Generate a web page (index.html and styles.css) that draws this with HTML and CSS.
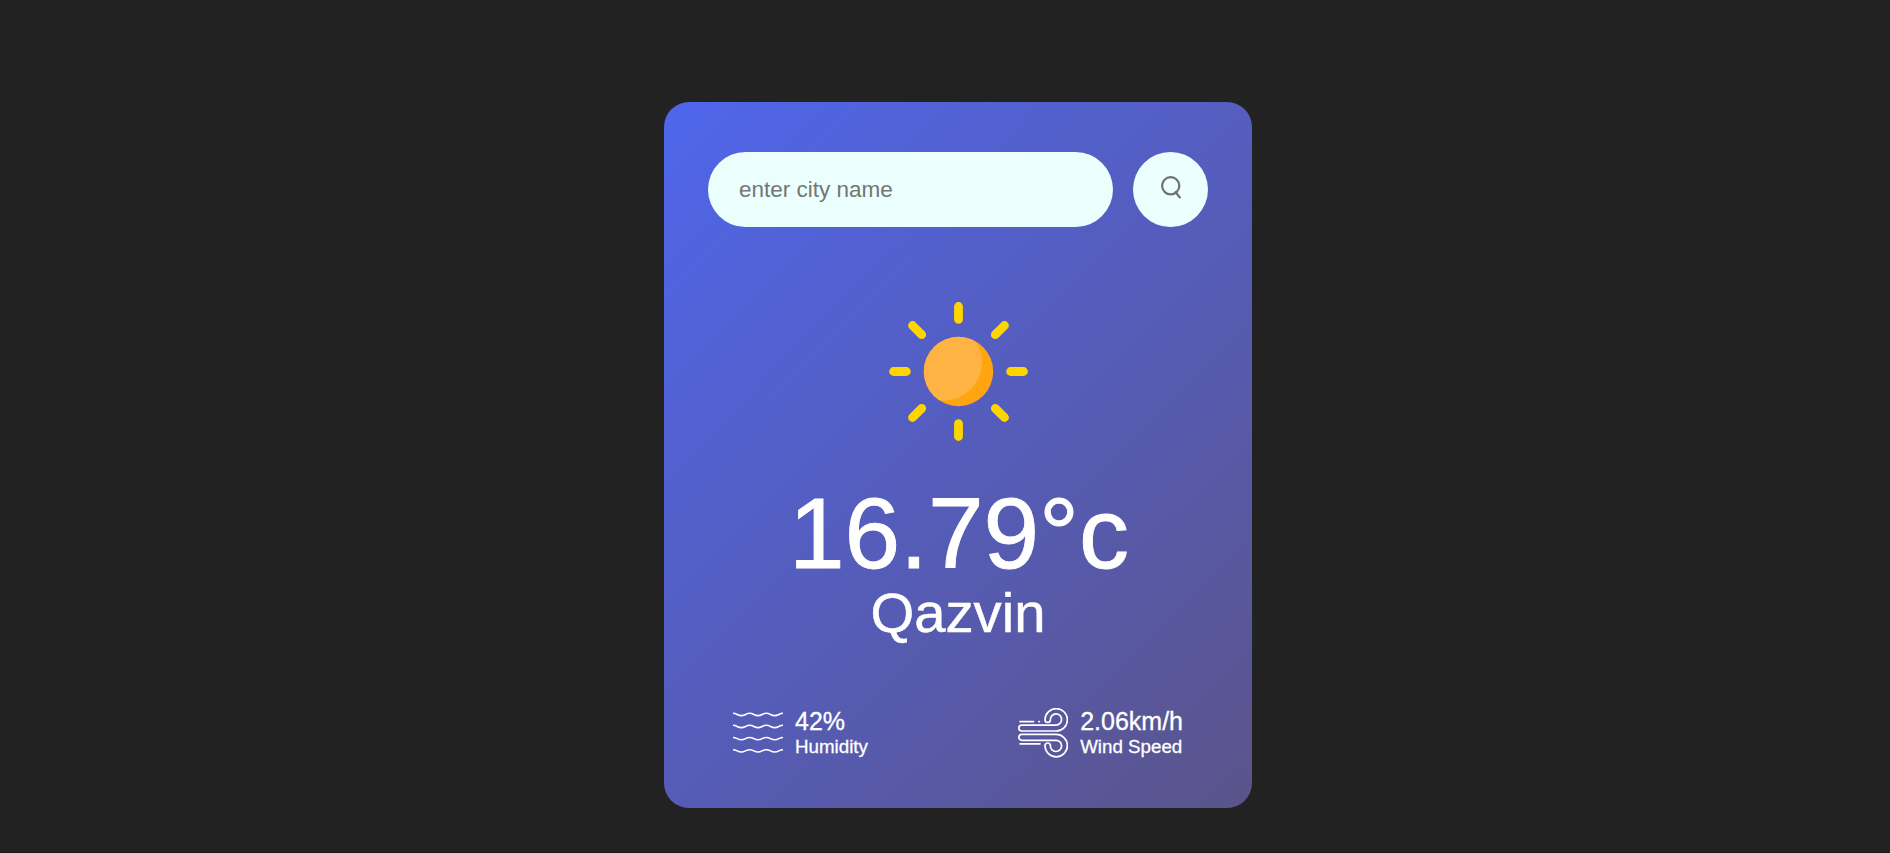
FILE: index.html
```html
<!DOCTYPE html>
<html lang="en">
<head>
<meta charset="utf-8">
<title>Weather App</title>
<link rel="stylesheet" href="styles.css">
</head>
<body>
<main class="card">
  <form class="search">
    <input class="search-input" type="text" placeholder="enter city name" spellcheck="false">
    <button class="search-button" type="button" aria-label="Search">
      <svg class="search-icon" viewBox="0 0 20 23" fill="none" stroke="#707070" stroke-width="2.2">
        <circle cx="9.7" cy="9.8" r="8.6"/>
        <path d="M14.6 16.2l4.2 5.2" stroke-linecap="round"/>
      </svg>
    </button>
  </form>
  <section class="weather">
    <svg class="weather-icon" viewBox="-0.5 -0.5 140 140">
      <clipPath id="disc"><circle cx="70" cy="70" r="34.7"/></clipPath>
      <circle cx="70" cy="70" r="34.7" fill="#ffa512"/>
      <circle cx="55.5" cy="61" r="38" fill="#ffb342" clip-path="url(#disc)"/>
      <g stroke="#ffd500" stroke-width="8.8" stroke-linecap="round">
        <path d="M70 5v12.9M70 122.1V135M5 70h12.9M122.1 70H135M24 24l9.2 9.2M116 24l-9.2 9.2M24 116l9.2-9.2M116 116l-9.2-9.2"/>
      </g>
    </svg>
    <h1 class="temp">16.79°c</h1>
    <h2 class="city">Qazvin</h2>
  </section>
  <section class="details">
    <div class="detail">
      <svg class="detail-icon" viewBox="0 0 50 50" fill="none" stroke="#fff" stroke-width="1.6">
        <path d="M0 5.3C4 5.3 4.3 7.6 8.3 7.6S12.7 5.3 16.7 5.3S21 7.6 25 7.6S29.3 5.3 33.3 5.3S37.7 7.6 41.7 7.6S46 5.3 50 5.3"/>
        <path d="M0 17.3C4 17.3 4.3 19.6 8.3 19.6S12.7 17.3 16.7 17.3S21 19.6 25 19.6S29.3 17.3 33.3 17.3S37.7 19.6 41.7 19.6S46 17.3 50 17.3"/>
        <path d="M0 29.5C4 29.5 4.3 31.8 8.3 31.8S12.7 29.5 16.7 29.5S21 31.8 25 31.8S29.3 29.5 33.3 29.5S37.7 31.8 41.7 31.8S46 29.5 50 29.5"/>
        <path d="M0 41.7C4 41.7 4.3 44 8.3 44S12.7 41.7 16.7 41.7S21 44 25 44S29.3 41.7 33.3 41.7S37.7 44 41.7 44S46 41.7 50 41.7"/>
      </svg>
      <div><p class="value">42%</p><p class="label">Humidity</p></div>
    </div>
    <div class="detail">
      <svg class="detail-icon" viewBox="0 0 50 50" fill="none" stroke="#fff" stroke-width="1.7" stroke-linecap="round">
        <path d="M2 13.6H15.5M20.8 13.6H21.4M2 35.8H22"/>
        <path d="M3.8 17.1H38A5.6 5.6 0 1 0 32.4 11.7A2.7 2.7 0 0 1 27 11.7A11.2 11.2 0 1 1 38 23H3.8A2.95 2.95 0 0 1 3.8 17.1Z"/>
        <path d="M3.8 32.3H38A5.6 5.6 0 1 1 32.4 37.7A2.7 2.7 0 0 0 27 37.7A11.2 11.2 0 1 0 38 26.4H3.8A2.95 2.95 0 0 0 3.8 32.3Z"/>
      </svg>
      <div><p class="value">2.06km/h</p><p class="label">Wind Speed</p></div>
    </div>
  </section>
</main>
</body>
</html>
```
FILE: styles.css
```css
* { margin: 0; padding: 0; box-sizing: border-box; }
body {
  min-height: 853px;
  padding: 102px 0 0 26px;
  border-bottom: 1px solid #20181f;
  background: #222;
  font-family: "Liberation Sans", Arial, sans-serif;
  overflow: hidden;
}
.card {
  width: 588px;
  height: 706px;
  margin: 0 auto;
  padding: 50px 44px;
  border-radius: 25px;
  background: linear-gradient(135deg, #4f66ec, #5b548a);
  color: #fff;
  text-align: center;
}
.search { display: flex; justify-content: space-between; }
.search-input {
  width: 405px;
  height: 75px;
  padding: 0 31px;
  border: 0;
  border-radius: 38px;
  background: #ebfffc;
  color: #555;
  font: 22.5px "Liberation Sans", Arial, sans-serif;
}
.search-input::placeholder { color: #757575; }
.search-button {
  display: flex;
  justify-content: center;
  width: 75px;
  height: 75px;
  padding-top: 24px;
  border: 0;
  border-radius: 50%;
  background: #ebfffc;
}
.search-icon { width: 20px; height: 23px; }
.weather { display: flex; flex-direction: column; align-items: center; padding-top: 74px; }
.weather-icon { width: 140px; height: 140px; }
.temp { margin-top: 45px; padding-left: 2px; font-size: 100px; line-height: 95px; font-weight: 500; -webkit-text-stroke: 0.9px #fff; }
.city { font-size: 56.25px; line-height: 64px; font-weight: 500; -webkit-text-stroke: 0.5px #fff; }
.details { display: flex; justify-content: space-between; padding: 0 25px; margin-top: 63px; }
.detail { display: flex; align-items: center; gap: 12px; text-align: left; -webkit-text-stroke: 0.3px #fff; }
.detail-icon { width: 50px; height: 50px; }
.value { font-size: 25px; line-height: 27px; }
.label { font-size: 18.75px; line-height: 23px; }
```
